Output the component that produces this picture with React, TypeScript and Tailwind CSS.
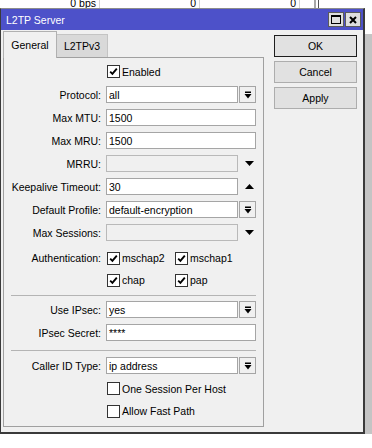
import type { ReactNode } from 'react';

const CheckMark = () => (
  <svg width="9" height="9" viewBox="0 0 9 9">
    <path d="M1.2 4.6 L3.4 6.8 L7.8 1.6" fill="none" stroke="#000" strokeWidth="1.9" />
  </svg>
);

const Check = ({ on }: { on?: boolean }) => (
  <span className="flex h-[13px] w-[13px] shrink-0 items-center justify-center border border-[#333] bg-white">
    {on && <CheckMark />}
  </span>
);

const CheckLabel = ({ on, label, className }: { on?: boolean; label: string; className?: string }) => (
  <div className={`flex items-center ${className ?? ''}`}>
    <Check on={on} />
    <span className="ml-[2px]">{label}</span>
  </div>
);

const Field = ({ value, short, disabled }: { value?: string; short?: boolean; disabled?: boolean }) => (
  <div
    className={`flex h-[17px] items-center border pl-[2px] ${short ? 'w-[132px]' : 'w-[150px]'} ${
      disabled ? 'border-[#b9b9b9] bg-[#f0f0f0]' : 'border-[#a5a5a5] bg-white'
    }`}
  >
    {value}
  </div>
);

const DropBtn = () => (
  <div className="ml-[1px] flex h-[17px] w-[17px] items-center justify-center border border-[#a5a5a5] bg-[#f0f0f0]">
    <svg width="8" height="8" viewBox="0 0 8 8">
      <rect x="1" y="0.5" width="6" height="1.5" fill="#000" />
      <path d="M0.5 3 H7.5 L4 7.5 Z" fill="#000" />
    </svg>
  </div>
);

const Tri = ({ up }: { up?: boolean }) => (
  <svg className="ml-[7px]" width="9" height="5" viewBox="0 0 9 5">
    <path d={up ? 'M0 5 H9 L4.5 0 Z' : 'M0 0 H9 L4.5 5 Z'} fill="#000" />
  </svg>
);

const Row = ({ label, short, children }: { label?: string; short?: boolean; children: ReactNode }) => (
  <div className={`flex items-center ${short ? 'h-[22px]' : 'h-[23px]'}`}>
    <div className="w-[97px] shrink-0 text-right">{label}</div>
    <div className="ml-[5px] flex items-center">{children}</div>
  </div>
);

const Separator = ({ className }: { className: string }) => (
  <div className={`ml-[7px] h-px w-[245px] bg-[#b4b4b4] ${className}`} />
);

const DialogButton = ({ label, primary }: { label: string; primary?: boolean }) => (
  <div
    className={`flex h-[22px] w-[83px] items-center justify-center border bg-[#e1e1e1] ${
      primary ? 'border-[#1e1e1e]' : 'border-[#adadad]'
    }`}
  >
    {label}
  </div>
);

const TitleBar = () => (
  <div className="flex h-[21px] items-center justify-between bg-[#4d51c9] pl-[5px] pr-[2px] text-white">
    <span>L2TP Server</span>
    <div className="flex gap-[1px]">
      <div className="flex h-[15px] w-[16px] items-center justify-center border border-[#5a5a5a] bg-[#dedede]">
        <div className="h-[9px] w-[10px] border border-t-2 border-black" />
      </div>
      <div className="flex h-[15px] w-[16px] items-center justify-center border border-[#5a5a5a] bg-[#dedede]">
        <svg width="8" height="8" viewBox="0 0 8 8">
          <path d="M1 1 L7 7 M7 1 L1 7" stroke="#000" strokeWidth="2" />
        </svg>
      </div>
    </div>
  </div>
);

const Tabs = () => (
  <div className="flex h-[26px] items-end">
    <div className="relative z-10 -mb-px flex h-[27px] w-[54px] items-center justify-center border border-b-0 border-[#b0b0b0] bg-[#f0f0f0]">
      General
    </div>
    <div className="flex h-[23px] w-[51px] items-center justify-center border border-b-0 border-l-0 border-[#c4c4c4] bg-[#d9d9d9]">
      L2TPv3
    </div>
  </div>
);

const Panel = () => (
  <div className="flex h-[370px] flex-col border border-[#a0a0a0] pt-[2px]">
    <Row>
      <CheckLabel on label="Enabled" className="ml-[1px]" />
    </Row>
    <Row label="Protocol:">
      <Field short value="all" />
      <DropBtn />
    </Row>
    <Row label="Max MTU:">
      <Field value="1500" />
    </Row>
    <Row label="Max MRU:">
      <Field value="1500" />
    </Row>
    <Row label="MRRU:">
      <Field short disabled />
      <Tri />
    </Row>
    <Row label="Keepalive Timeout:">
      <Field short value="30" />
      <Tri up />
    </Row>
    <Row label="Default Profile:">
      <Field short value="default-encryption" />
      <DropBtn />
    </Row>
    <Row label="Max Sessions:">
      <Field short disabled />
      <Tri />
    </Row>
    <div className="mt-[3px]">
      <Row short label="Authentication:">
        <CheckLabel on label="mschap2" className="ml-[1px] w-[68px]" />
        <CheckLabel on label="mschap1" />
      </Row>
      <Row short>
        <CheckLabel on label="chap" className="ml-[1px] w-[68px]" />
        <CheckLabel on label="pap" />
      </Row>
    </div>
    <Separator className="mt-[4px]" />
    <div className="mt-[2px]">
      <Row label="Use IPsec:">
        <Field short value="yes" />
        <DropBtn />
      </Row>
      <Row label="IPsec Secret:">
        <Field value="****" />
      </Row>
    </div>
    <Separator className="mt-[6px]" />
    <div className="mt-[3px]">
      <Row label="Caller ID Type:">
        <Field short value="ip address" />
        <DropBtn />
      </Row>
      <Row>
        <CheckLabel label="One Session Per Host" className="ml-[1px]" />
      </Row>
      <Row short>
        <CheckLabel label="Allow Fast Path" className="ml-[1px]" />
      </Row>
    </div>
  </div>
);

const Behind = () => (
  <>
    <div className="absolute left-0 top-0 flex h-[8px] w-full overflow-hidden">
      <div className="w-[100px] border-r border-[#d6d6d6] pr-[3px] text-right">
        <span className="-mt-[3px] block">0 bps</span>
      </div>
      <div className="w-[100px] border-r border-[#d6d6d6] pr-[3px] text-right">
        <span className="-mt-[3px] block">0</span>
      </div>
      <div className="w-[100px] border-r border-[#d6d6d6] pr-[3px] text-right">
        <span className="-mt-[3px] block">0</span>
      </div>
      <div className="ml-[14px] w-[2px] bg-[#a8a8a8]" />
      <div className="ml-[2px] w-px bg-[#555]" />
    </div>
    <div className="absolute left-[365px] top-[34px] h-[400px] w-[7px] bg-[#c4c4c4]" />
  </>
);

export default function App() {
  return (
    <div className="relative h-[448px] w-[372px] overflow-hidden bg-white font-['Liberation_Sans',Arial,sans-serif] text-[10.5px] leading-[12px] text-black">
      <Behind />
      <div className="absolute left-0 top-[8px] flex h-[426px] w-[365px] flex-col border-b-2 border-l border-r-2 border-t border-[#3a3a3a] border-t-[#8c8c8c] bg-[#f0f0f0]">
        <TitleBar />
        <div className="flex flex-1 pl-[2px] pt-[1px]">
          <div className="flex w-[261px] flex-col">
            <Tabs />
            <Panel />
          </div>
          <div className="ml-[10px] mt-[4px] flex flex-col gap-[4px]">
            <DialogButton primary label="OK" />
            <DialogButton label="Cancel" />
            <DialogButton label="Apply" />
          </div>
        </div>
      </div>
    </div>
  );
}
